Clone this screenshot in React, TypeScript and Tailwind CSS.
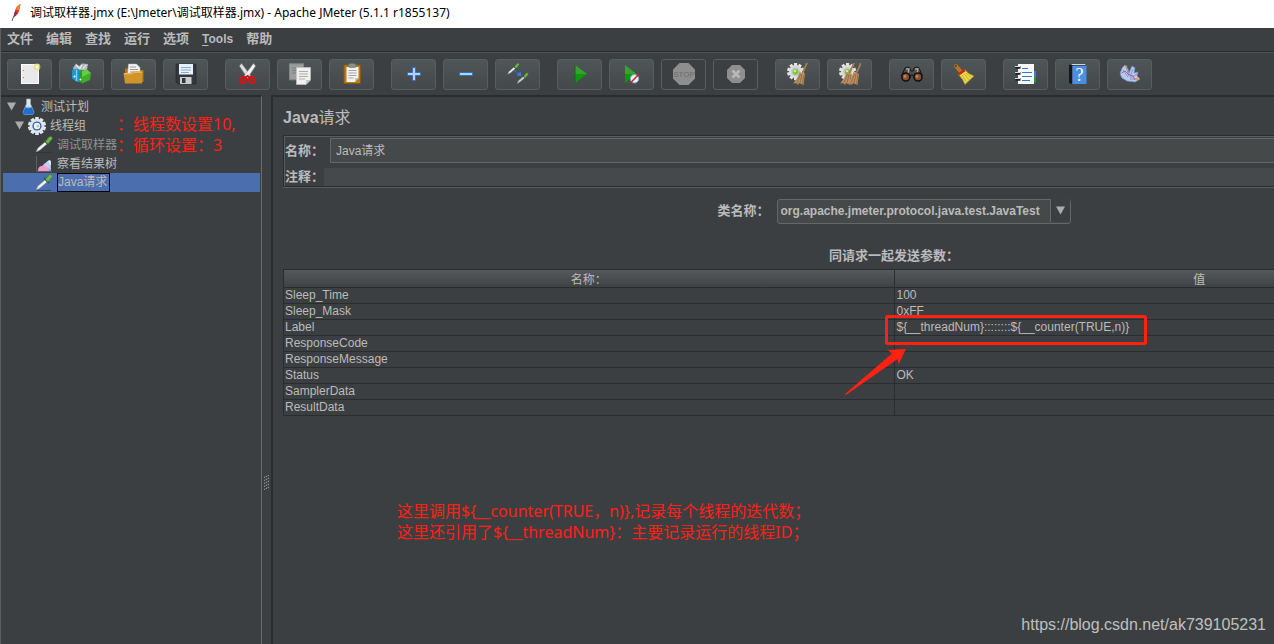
import type { ReactNode } from 'react';

interface Tool {
  label: string;
  icon: ReactNode;
  disabled?: boolean;
}

const gearTeeth = [0, 36, 72, 108, 144, 180, 216, 252, 288, 324];

function Dropper({ light = '#f4f4f4' }: { light?: string }) {
  return (
    <g>
      <path d="M1 16 L3 12 L10 6 L12 8 L5 14 Z" fill={light} stroke="#8d9090" strokeWidth="0.5" />
      <path d="M9 4 L14 9" stroke="#2c5a25" strokeWidth="1.6" />
      <path d="M10.5 5.5 L14 1 Q17 -0.5 17.5 2.5 L13 8 Z" fill="#6fb352" stroke="#3c7a2c" strokeWidth="0.5" />
    </g>
  );
}

function SmallGear() {
  return (
    <g>
      {gearTeeth.map((angle) => (
        <rect key={angle} x="8" y="0" width="3.2" height="4" fill="#e4e4e4" transform={`rotate(${angle} 9.6 8.6)`} />
      ))}
      <circle cx="9.6" cy="8.6" r="6.6" fill="#dcdcdc" />
      <circle cx="9.6" cy="8.6" r="4.4" fill="#c4c6c4" />
      <circle cx="9.6" cy="9" r="2.8" fill="#7cc83a" />
      <circle cx="9" cy="8.2" r="1.1" fill="#d5f2a8" />
    </g>
  );
}

function Broom() {
  return (
    <g>
      <path d="M21 0 L16.5 10" stroke="#a97d4c" strokeWidth="1.8" />
      <path d="M13.5 9 L19 11 L17.5 22 L13 20 L12 22 L10 20 L7 20.5 Q12 15 13.5 9 Z" fill="#b98e62" />
      <path d="M14.5 11 L11 20 M16 11 L14 20 M18 12 L16.5 21" stroke="#8a6238" strokeWidth="0.7" />
    </g>
  );
}

const toolGroups: Tool[][] = [
  [
    {
      label: 'New',
      icon: (
        <>
          <rect x="3.5" y="1.5" width="17" height="19" fill="#e9e9e9" stroke="#fafafa" />
          <path d="M5 7.5h1 M5 14.5h1" stroke="#888" />
          <circle cx="19" cy="4" r="3.4" fill="#e8dc62" opacity="0.75" />
          <circle cx="19" cy="4" r="1.7" fill="#fffbd0" />
        </>
      ),
    },
    {
      label: 'Templates',
      icon: (
        <>
          <path d="M3 5 L6 0.5 L9 3 L12 0.5 L18 1 L17 7 L4 8 Z" fill="#b3b8ba" />
          <path d="M6 2 L10 6 M12 2 L9 7 M16 2 L13 6" stroke="#ececec" strokeWidth="1.2" />
          <path d="M2 7 L7 5.5 L11 7 V19 L7 19 L2 15.5 Z" fill="#1f93d2" />
          <path d="M6.5 6.5 V18" stroke="#7fd0f5" strokeWidth="1.4" />
          <path d="M9 8 L13 7 L13 20.5 L9 19 Z" fill="#2c9c22" />
          <path d="M12 8 L17 6.5 L21 10 L20 17 L12 20.5 Z" fill="#3fae24" />
          <path d="M12 8 L17 6.5 L20.5 10 L12 14 Z" fill="#66cc42" />
          <circle cx="4.5" cy="13.5" r="1" fill="#fff" />
          <circle cx="10.5" cy="16.5" r="1" fill="#fff" />
        </>
      ),
    },
    {
      label: 'Open',
      icon: (
        <>
          <path d="M3 5.5 H9 L10 7 H21.5 V19 H3 Z" fill="#b47813" />
          <path d="M6.5 1 H14.5 L18 4.5 V13 H5.5 Z" fill="#f3f3f3" stroke="#bcbcbc" strokeWidth="0.5" />
          <path d="M8 4h6 M8 6.5h8 M8 9h8" stroke="#9a9a9a" />
          <path d="M1.5 10 H9 L11 8.5 H20.5 L20 20.5 H3 Z" fill="#d0942a" />
          <path d="M2 10.8 H9.5 L11.5 9.2 H20" stroke="#f4c768" fill="none" />
        </>
      ),
    },
    {
      label: 'Save',
      icon: (
        <>
          <path d="M2 1 H22 V21 H4 L2 19 Z" fill="#33383c" stroke="#202326" strokeWidth="0.6" />
          <rect x="5" y="1" width="14" height="10.5" fill="#e8f0f8" />
          <path d="M7 4.5h10 M7 7h10 M7 9.5h8" stroke="#89a9cf" />
          <rect x="6" y="14" width="11.5" height="7" fill="#c9cbcc" />
          <rect x="8" y="15" width="3.5" height="5" fill="#34383b" />
        </>
      ),
    },
  ],
  [
    {
      label: 'Cut',
      icon: (
        <>
          <path d="M5.5 0.5 L14.5 12.5 L11.5 15 L3.5 3 Z" fill="#dfe1e1" stroke="#9b9d9d" strokeWidth="0.5" />
          <path d="M17.5 0.5 L8.5 12.5 L11.5 15 L19.5 3 Z" fill="#f2f2f2" stroke="#9b9d9d" strokeWidth="0.5" />
          <ellipse cx="7" cy="17" rx="2.6" ry="3" fill="none" stroke="#d31518" strokeWidth="2.4" transform="rotate(35 7 17)" />
          <ellipse cx="16" cy="17" rx="2.6" ry="3" fill="none" stroke="#d31518" strokeWidth="2.4" transform="rotate(-35 16 17)" />
          <path d="M8.5 15 L11.5 13 L14.5 15" stroke="#d31518" strokeWidth="2" fill="none" />
        </>
      ),
    },
    {
      label: 'Copy',
      icon: (
        <>
          <rect x="1.5" y="0.8" width="14" height="16" fill="#9b9d9e" stroke="#838587" />
          <path d="M4 5h9 M4 7.5h5 M4 10h4" stroke="#7b7d7e" />
          <path d="M8.5 4.5 H22.5 V17 L18 21.5 H8.5 Z" fill="#f0f0ee" stroke="#c3c3c1" strokeWidth="0.7" />
          <path d="M11 8.5h9 M11 11h9 M11 13.5h9 M11 16h6" stroke="#adadab" />
          <path d="M22.5 17 H18 V21.5 Z" fill="#c6c6c4" />
        </>
      ),
    },
    {
      label: 'Paste',
      icon: (
        <>
          <rect x="4" y="2" width="16.5" height="18.5" rx="1" fill="#b97a1c" stroke="#8a5810" />
          <path d="M6.5 4 H18.5 V15 L15 19 H6.5 Z" fill="#f2f2f0" />
          <path d="M8.5 7.5h8 M8.5 10h8 M8.5 12.5h8 M8.5 15h5" stroke="#a5a5a3" />
          <path d="M18.5 15 H15 V19 Z" fill="#c2c2c0" />
          <rect x="8.5" y="0.5" width="7.5" height="4" rx="1.5" fill="#8c8f89" stroke="#66695f" strokeWidth="0.6" />
        </>
      ),
    },
  ],
  [
    {
      label: 'Expand All',
      icon: <path d="M10.5 4.5 h3 v5 h5 v3 h-5 v5 h-3 v-5 h-5 v-3 h5 Z" fill="#b4d2f3" stroke="#2f72c4" />,
    },
    {
      label: 'Collapse All',
      icon: <rect x="5.5" y="9.5" width="13" height="3" fill="#b4d2f3" stroke="#2f72c4" />,
    },
    {
      label: 'Toggle',
      icon: (
        <>
          <g transform="translate(1 0) scale(0.7)">
            <Dropper />
          </g>
          <g transform="translate(10.5 9.5) scale(0.68)">
            <Dropper light="#d0d3d3" />
          </g>
          <path d="M8.5 7.5 L13 11.5" stroke="#1f72e0" strokeWidth="1.6" strokeDasharray="2 1" />
          <path d="M15.5 13 L10.5 12.5 L14.5 8.5 Z" fill="#2f80ea" />
        </>
      ),
    },
  ],
  [
    {
      label: 'Start',
      icon: (
        <>
          <path d="M7 2 L19 11 L7 20 Z" fill="#0a9a0a" />
          <path d="M7 2 L19 11 H7 Z" fill="#3aa032" />
          <path d="M7 2 L7 20" stroke="#0a6a10" />
        </>
      ),
    },
    {
      label: 'Start no pauses',
      icon: (
        <>
          <path d="M5 2 L16.5 11 L5 20 Z" fill="#0a9a0a" />
          <path d="M5 2 L16.5 11 H5 Z" fill="#3aa032" />
          <circle cx="14.5" cy="15.8" r="4.2" fill="#e9f2fb" stroke="#7aa5cf" />
          <path d="M18.5 11.5 L10.5 20" stroke="#d8262b" strokeWidth="1.6" />
        </>
      ),
    },
    {
      label: 'Stop',
      disabled: true,
      icon: (
        <>
          <path d="M7.5 0 H16.5 L23 6.5 V15.5 L16.5 22 H7.5 L1 15.5 V6.5 Z" fill="#8e8e8e" />
          <text x="12" y="14" fontSize="8" fontFamily="Liberation Sans" textAnchor="middle" fill="#6c6c6c">
            STOP
          </text>
        </>
      ),
    },
    {
      label: 'Shutdown',
      disabled: true,
      icon: (
        <>
          <path d="M8 2 H16 L21 7 V15 L16 20 H8 L3 15 V7 Z" fill="#8e8e8e" />
          <path d="M8.5 7.5 L15.5 14.5 M15.5 7.5 L8.5 14.5" stroke="#b8b8b8" strokeWidth="2.8" />
        </>
      ),
    },
  ],
  [
    {
      label: 'Clear',
      icon: (
        <>
          <SmallGear />
          <Broom />
        </>
      ),
    },
    {
      label: 'Clear All',
      icon: (
        <>
          <SmallGear />
          <g transform="translate(-5 0)">
            <Broom />
          </g>
          <g transform="translate(2 0)">
            <Broom />
          </g>
        </>
      ),
    },
  ],
  [
    {
      label: 'Search',
      icon: (
        <>
          <path d="M5 5 Q7 3 10 5 L11 8 H13 L14 5 Q17 3 19 5 L22 12 L20 18 L14 15 L13 12 H11 L10 15 L4 18 L2 12 Z" fill="#4c4c4c" stroke="#141414" />
          <path d="M6 6 L9 6 L8 10 M15 6 L18 6 L17 10" stroke="#a5a5a5" fill="none" strokeWidth="1.4" />
          <circle cx="5.8" cy="14" r="4" fill="#8a4f2c" stroke="#111" strokeWidth="1.6" />
          <circle cx="18" cy="14" r="4" fill="#8a4f2c" stroke="#111" strokeWidth="1.6" />
          <circle cx="5" cy="13.5" r="1.4" fill="#c4825c" />
          <circle cx="17" cy="13.5" r="1.4" fill="#c4825c" />
        </>
      ),
    },
    {
      label: 'Reset Search',
      icon: (
        <>
          <path d="M4 3 L9.5 9.5" stroke="#b17620" strokeWidth="4" strokeLinecap="round" />
          <circle cx="3.8" cy="3" r="0.9" fill="#4e340d" />
          <path d="M6 11 L13 6.5 Q16 11 22 13 L13 21.5 Q11 16 6 11 Z" fill="#ecd84c" stroke="#a08a10" strokeWidth="0.7" />
          <path d="M10 12 L14.5 19 M12.5 11 L17 17 M14 10 L19.5 15" stroke="#b9a21e" strokeWidth="0.7" />
          <path d="M6.5 11.5 L13 7" stroke="#d4201c" strokeWidth="2.4" />
        </>
      ),
    },
  ],
  [
    {
      label: 'Function Helper',
      icon: (
        <>
          <rect x="17" y="8" width="5" height="6" fill="#3d7fdc" />
          <rect x="17" y="14" width="5" height="5.5" fill="#23992d" />
          <rect x="4" y="1" width="16" height="20" fill="#f8f8f8" />
          <path d="M8 5.5h6 M8 9.5h10 M8 13.5h10 M8 17.5h8" stroke="#3a78bd" />
          <path d="M1.5 4.5h5 M1.5 10.5h5 M1.5 16.5h5" stroke="#1d1d1d" strokeWidth="2.6" />
          <path d="M1 3.5h5 M1 9.5h5 M1 15.5h5" stroke="#d9d9d9" strokeWidth="1.2" />
        </>
      ),
    },
    {
      label: 'Help',
      icon: (
        <>
          <path d="M3 2 L6 1 H20 V3 H6 V21 L3 20 Z" fill="#15181b" />
          <rect x="6.5" y="2.5" width="14" height="18.5" fill="#4b8ddf" />
          <path d="M5.5 1.5 H19.5" stroke="#d5d5d5" />
          <text x="13.5" y="18" fontSize="18" fontFamily="Liberation Serif" textAnchor="middle" fill="#fff">
            ?
          </text>
        </>
      ),
    },
    {
      label: 'Undo',
      icon: (
        <>
          <path d="M4 15 Q1 10 3 8 Q4 4 7 2 L10 6 L11 10 L14 3 L17 5 L16 10 L20 9 L19 13 L22 16 L17 19 L9 18 Z" fill="#b9c9ec" stroke="#6f8fd0" strokeWidth="0.7" />
          <path d="M5 7 L10 14 M8 4 L11 13 M15 6 L12 14 M19 11 L12 15 M20 16 L12 16" stroke="#6c8bd4" strokeWidth="0.8" />
          <path d="M3.5 10 L7 8 L10 11 L15 13 L17 17" stroke="#cf3b57" fill="none" strokeWidth="0.8" />
          <circle cx="8" cy="3.5" r="1.1" fill="#f09a3c" />
          <circle cx="19" cy="16" r="1.3" fill="#f09a3c" />
        </>
      ),
    },
  ],
];

const menus = ['文件', '编辑', '查找', '运行', '选项', 'Tools', '帮助'];

const parameters = [
  { name: 'Sleep_Time', value: '100' },
  { name: 'Sleep_Mask', value: '0xFF' },
  { name: 'Label', value: '${__threadNum}::::::::${__counter(TRUE,n)}' },
  { name: 'ResponseCode', value: '' },
  { name: 'ResponseMessage', value: '' },
  { name: 'Status', value: 'OK' },
  { name: 'SamplerData', value: '' },
  { name: 'ResultData', value: '' },
];

function TitleBar() {
  return (
    <header className="flex h-7 shrink-0 items-center gap-2 bg-white pb-0.5 pl-2 font-['Noto_Sans','Noto_Sans_CJK_SC',sans-serif] text-xs text-black">
      <svg className="h-5 w-3.5" viewBox="0 0 14 20">
        <path d="M12.5 1 Q8 3 7 8 L5.5 14 Q10 12 11 8 Z" fill="#d5332b" />
        <path d="M12.5 1 Q9 3 8 7 L11.5 7 Z" fill="#ef8a25" />
        <path d="M7 8 L5.5 14 Q8 13 9 10 Z" fill="#8d2a66" />
        <path d="M6 12.5 L4 18" stroke="#5b3a52" strokeWidth="0.9" />
      </svg>
      <h1 className="whitespace-nowrap">调试取样器.jmx (E:\Jmeter\调试取样器.jmx) - Apache JMeter (5.1.1 r1855137)</h1>
    </header>
  );
}

function MenuBar() {
  return (
    <nav className="flex h-6 shrink-0 items-center gap-[13px] border-b border-[#282a2c] pb-0.5 pl-1.5 text-[13px] font-bold">
      {menus.map((menu) => (
        <button key={menu} type="button" className="whitespace-nowrap">
          {menu === 'Tools' ? (
            <span className="text-xs">
              <span className="underline underline-offset-2">T</span>ools
            </span>
          ) : (
            menu
          )}
        </button>
      ))}
    </nav>
  );
}

function ToolBar() {
  return (
    <div className="flex h-[43px] shrink-0 gap-[17px] border-t border-[#56524f] pt-1.5 pl-1.5">
      {toolGroups.map((group) => (
        <div key={group[0].label} className="flex gap-[7px]">
          {group.map((tool) => (
            <button
              key={tool.label}
              type="button"
              aria-label={tool.label}
              disabled={tool.disabled}
              className="flex h-[31px] w-[45px] items-center justify-center rounded-[3px] border border-[#5a5d5e] bg-linear-to-b from-[#505557] to-[#44484a] disabled:bg-none"
            >
              <svg className="h-[23px] w-[23px] shrink-0" viewBox="0 0 23 23">
                {tool.icon}
              </svg>
            </button>
          ))}
        </div>
      ))}
    </div>
  );
}

function Expander() {
  return (
    <svg className="h-[9px] w-[9px] shrink-0" viewBox="0 0 9 9">
      <path d="M0 0.5 H9 L4.5 8.5 Z" fill="#a9abac" />
    </svg>
  );
}

function DropperIcon() {
  return (
    <svg className="h-[18px] w-[18px] shrink-0" viewBox="0 0 18 18">
      <path d="M1 16.5 H16" stroke="#2b2d2f" opacity="0.6" />
      <Dropper />
    </svg>
  );
}

function TestPlanTree() {
  return (
    <aside className="relative w-[261px] shrink-0 border-t-2 border-r border-t-[#2a2c2e] border-r-[#6a6c6d] pr-px pl-0.5">
      <ul className="text-xs whitespace-nowrap">
        <li className="flex h-[19px] items-center gap-1 pl-1">
          <Expander />
          <svg className="h-[17px] w-[17px] shrink-0" viewBox="0 0 17 17">
            <path d="M6.5 1 H10.5 V6 L14 14 Q14 16.5 12 16.5 H5 Q3 16.5 3 14 L6.5 6 Z" fill="#dbe7f2" stroke="#9fb2c2" strokeWidth="0.6" />
            <path d="M5.5 9 H11.5 L14 14 Q14 16.5 12 16.5 H5 Q3 16.5 3 14 Z" fill="#1e6fd0" />
            <ellipse cx="8.5" cy="9.3" rx="3" ry="0.9" fill="#7fb8f2" />
          </svg>
          测试计划
        </li>
        <li className="flex h-[19px] items-center gap-1 pl-3">
          <Expander />
          <svg className="h-[18px] w-[18px] shrink-0" viewBox="0 0 18 18">
            {gearTeeth.map((angle) => (
              <rect key={angle} x="7.2" y="0" width="3.6" height="4" fill="#e3e8ee" transform={`rotate(${angle} 9 9)`} />
            ))}
            <circle cx="9" cy="9" r="7.2" fill="#dfe5ec" />
            <circle cx="9" cy="9" r="4.6" fill="#3a62a0" />
            <circle cx="9" cy="9" r="3.2" fill="#f2f5f8" />
            <circle cx="9.8" cy="9.2" r="1.4" fill="#b4c4da" />
          </svg>
          线程组
        </li>
        <li className="flex h-[19px] items-center gap-1 pl-8 text-[#8f9192]">
          <DropperIcon />
          调试取样器
        </li>
        <li className="flex h-[19px] items-center gap-1 pl-8">
          <svg className="h-[18px] w-[18px] shrink-0" viewBox="0 0 18 18">
            <path d="M1.5 1 V16.5 H17" stroke="#5d6062" fill="none" />
            <path d="M3 16 Q3 11 7 11 L10 8 L13 12 L15 16 Z" fill="#f29ccb" />
            <path d="M9 10 Q13 4 15.5 6 L16 16 L13 13 Z" fill="#b9d3f6" />
            <path d="M13 6 Q15 4.5 15.8 6 L16 11 Z" fill="#eef5ff" />
          </svg>
          察看结果树
        </li>
        <li className="flex h-[19px] items-center gap-1 bg-[#4b6eaf] pl-8">
          <DropperIcon />
          <span className="border border-black pr-0.5 leading-[17px]">Java请求</span>
        </li>
      </ul>
      <p className="absolute top-[17px] left-[116px] font-['Noto_Sans','Noto_Sans_CJK_SC',sans-serif] text-base leading-[21px] whitespace-nowrap text-[#ff2015]">
        ：线程数设置10,
        <br />
        ：循环设置：3
      </p>
    </aside>
  );
}

function Splitter() {
  return (
    <div className="flex w-[9px] shrink-0 justify-center pt-[380px]">
      <svg className="h-4 w-[5px]" viewBox="0 0 5 16">
        <path
          d="M0 2.5 L5 0 M0 5.5 L5 3 M0 8.5 L5 6 M0 11.5 L5 9 M0 14.5 L5 12"
          stroke="#a5a7a8"
          strokeWidth="1"
          strokeDasharray="1.4 0.8"
        />
      </svg>
    </div>
  );
}

function ParameterTable() {
  return (
    <div className="relative">
      <table className="w-full table-fixed border-collapse border border-[#2a2c2e] text-xs">
        <thead>
          <tr className="h-[18px] bg-linear-to-b from-[#56595b] to-[#3e4143]">
            <th className="border border-[#2a2c2e] px-0 pt-[3px] pb-0 leading-[14px] font-normal">名称：</th>
            <th className="border border-[#2a2c2e] px-0 pt-[3px] pb-0 leading-[14px] font-normal">值</th>
          </tr>
        </thead>
        <tbody>
          {parameters.map((parameter) => (
            <tr key={parameter.name} className="h-4">
              <td className="border border-[#2a2c2e] px-px py-0 leading-[15px]">{parameter.name}</td>
              <td className="border border-[#2a2c2e] px-0.5 py-0 leading-[15px]">{parameter.value}</td>
            </tr>
          ))}
        </tbody>
      </table>
      <div className="absolute top-[46px] left-[602px] h-[30px] w-[262px] rounded-[3px] border-3 border-[#ff2211]" />
      <svg className="absolute top-[79px] left-[561px] h-12 w-[63px]" viewBox="0 0 63 48">
        <path d="M62 0.7 L43.5 2 L48 5.6 L1 46 L2 47 L53.5 11 L54.5 16.5 Z" fill="#ff2211" />
      </svg>
    </div>
  );
}

function JavaRequestPanel() {
  return (
    <main className="min-w-0 flex-1 overflow-hidden border-t-2 border-l-2 border-[#2a2c2e] pl-2.5">
      <div className="w-[1222px]">
        <h2 className="pt-2 text-base leading-[26px] font-bold">
          Java<span className="font-normal">请求</span>
        </h2>
        <form>
          <div className="mt-1 flex flex-col gap-[5px] border border-[#2a2c2e] shadow-[inset_1px_1px_0_#5a5d5f,0_1px_0_#5a5d5f]">
            <div className="flex items-center pt-0.5 pl-px">
              <label htmlFor="name" className="w-[45px] text-[13px] font-bold whitespace-nowrap">
                名称：
              </label>
              <input
                id="name"
                defaultValue="Java请求"
                className="h-[25px] flex-1 border border-[#646668] bg-[#45494a] px-[5px] pb-0.5 text-xs outline-none"
              />
            </div>
            <div className="flex items-center pl-px">
              <label htmlFor="comment" className="w-[39px] text-[13px] leading-[18px] font-bold whitespace-nowrap">
                注释：
              </label>
              <input id="comment" className="h-[18px] flex-1 bg-[#45494a] px-1 text-xs outline-none" />
            </div>
          </div>
          <div className="flex items-center justify-center gap-[7px] pt-[11px]">
            <label htmlFor="class-name" className="text-[13px] font-bold">
              类名称：
            </label>
            <div className="relative">
              <select
                id="class-name"
                className="h-[25px] w-[294px] appearance-none rounded-[3px] border border-[#646668] bg-[#45494a] pb-px pl-[3px] text-xs font-bold outline-none"
              >
                <option>org.apache.jmeter.protocol.java.test.JavaTest</option>
              </select>
              <span className="pointer-events-none absolute top-px right-px flex h-[23px] w-5 items-center justify-center rounded-r-[2px] border-l border-[#646668] bg-[#3c3f41]">
                <Expander />
              </span>
            </div>
          </div>
        </form>
        <h3 className="pt-[22px] pb-1 text-center text-[13px] leading-[19px] font-bold">同请求一起发送参数：</h3>
        <ParameterTable />
        <p className="mt-[85px] ml-[114px] font-['Noto_Sans','Noto_Sans_CJK_SC',sans-serif] text-base leading-[21px] text-[#ff2015]">
          {'这里调用${__counter(TRUE，n)},记录每个线程的迭代数；'}
          <br />
          {'这里还引用了${__threadNum}：主要记录运行的线程ID；'}
        </p>
      </div>
    </main>
  );
}

export default function App() {
  return (
    <div className="relative flex min-h-screen flex-col overflow-hidden bg-[#3c3f41] font-['Liberation_Sans','Noto_Sans_CJK_SC',sans-serif] text-[#bbbbbb]">
      <TitleBar />
      <div className="flex flex-1 flex-col border-l border-[#5c5e60]">
        <MenuBar />
        <ToolBar />
        <div className="flex flex-1">
          <TestPlanTree />
          <Splitter />
          <JavaRequestPanel />
        </div>
      </div>
      <p className="absolute right-2 bottom-[7px] text-base text-[#bfc0c0]">https://blog.csdn.net/ak739105231</p>
    </div>
  );
}
